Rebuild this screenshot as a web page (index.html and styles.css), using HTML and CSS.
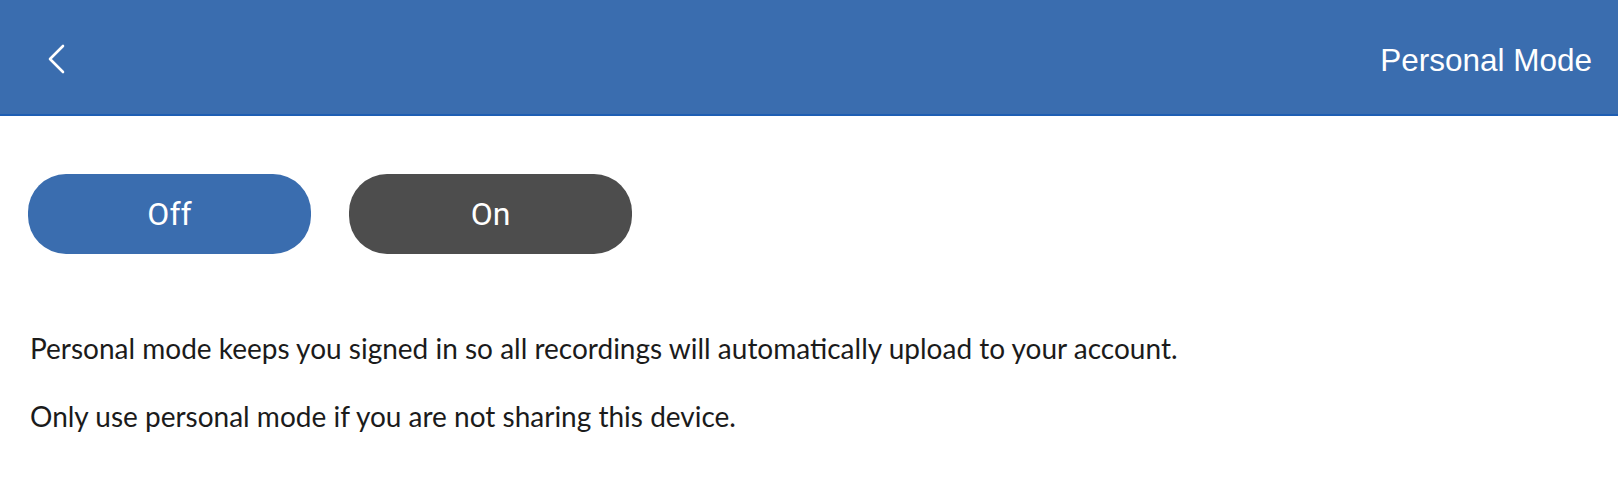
FILE: index.html
```html
<!DOCTYPE html>
<html lang="en">
<head>
<meta charset="utf-8">
<title>Personal Mode</title>
<link rel="stylesheet" href="styles.css">
</head>
<body>
<header class="topbar">
  <button class="back" aria-label="Back">
    <svg width="18" height="30" viewBox="0 0 18 30" aria-hidden="true">
      <path d="M16 2 L3 15 L16 28" fill="none" stroke="#fff" stroke-width="2.6" stroke-linecap="round" stroke-linejoin="round"/>
    </svg>
  </button>
  <h1 class="title">Personal Mode</h1>
</header>
<main class="content">
  <div class="toggle">
    <button class="pill pill-off">Off</button>
    <button class="pill pill-on">On</button>
  </div>
  <p class="desc first">Personal mode keeps you signed in so all recordings will automatically upload to your account.</p>
  <p class="desc">Only use personal mode if you are not sharing this device.</p>
</main>
</body>
</html>
```

FILE: styles.css
```css
html, body {
  margin: 0;
  padding: 0;
  background: #ffffff;
}

.topbar {
  height: 114px;
  background: #3a6daf;
  border-bottom: 2px solid #1e5eb3;
  display: flex;
  align-items: center;
  justify-content: space-between;
  padding: 0 26px 0 47px;
}

.back {
  background: none;
  border: 0;
  padding: 0;
  margin: 4px 0 0 0;
  display: flex;
  cursor: pointer;
}

.title {
  margin: 0;
  color: #ffffff;
  font-family: "Liberation Sans", Arial, sans-serif;
  font-weight: 400;
  font-size: 31.5px;
  line-height: 36px;
  margin-top: 6px;
}

.content {
  padding: 58px 28px 0 28px;
}

.toggle {
  display: flex;
  gap: 38px;
}

.pill {
  width: 283px;
  height: 80px;
  border: 0;
  border-radius: 38px;
  color: #ffffff;
  font-family: Roboto, "Liberation Sans", sans-serif;
  font-size: 32px;
  font-weight: 400;
  padding: 0;
  cursor: pointer;
}

.pill-off {
  background: #3a6daf;
}

.pill-on {
  background: #4d4d4d;
}

.desc {
  margin: 34px 0 0 2px;
  font-family: Lato, "Open Sans", sans-serif;
  font-size: 28px;
  line-height: 34px;
  color: #1b1b1b;
}

.desc.first {
  margin-top: 77px;
}
```
